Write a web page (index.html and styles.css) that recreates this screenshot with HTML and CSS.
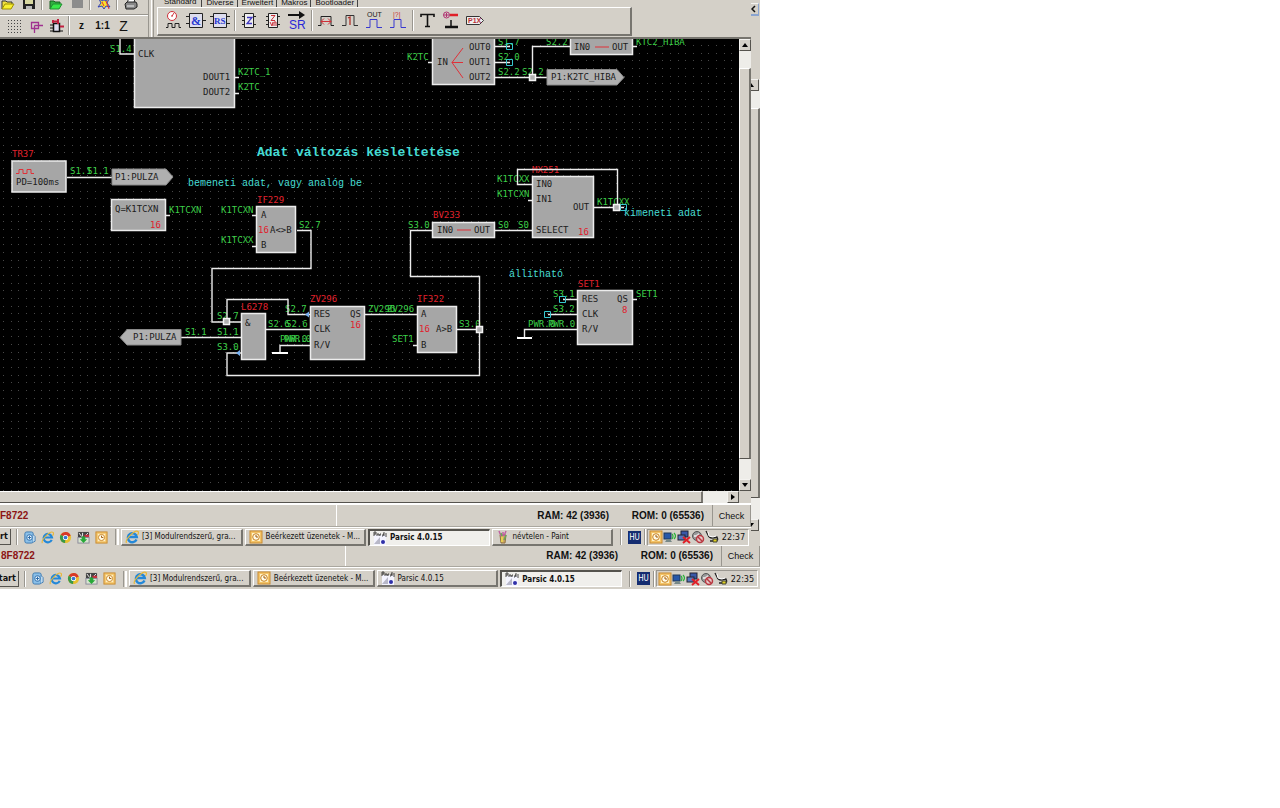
FILE: index.html
```html
<!DOCTYPE html>
<html lang="hu">
<head>
<meta charset="utf-8">
<title>Parsic 4.0.15</title>
<link rel="stylesheet" href="styles.css">
</head>
<body>
<svg class="defs" aria-hidden="true">
  <defs>
    <symbol id="i-mail" viewBox="0 0 14 14"><rect x="2" y="1" width="9" height="12" rx="2" fill="#8cc0e8" stroke="#3a78b0"/><path d="M11 4l2 2v5l-2 1" fill="#d8ecfa" stroke="#3a78b0"/><circle cx="7" cy="7" r="3" fill="#e8f6ff" stroke="#2868a8"/><path d="M5 7h4M7 5v4" stroke="#2868a8"/></symbol>
    <symbol id="i-ie" viewBox="0 0 14 14"><path d="M11.500 9.500A4.500 4.500 0 1 1 11.800 7H4" fill="none" stroke="#2488d8" stroke-width="2.400"/><path d="M1.500 13C-.5 10 10-1 13 1.500c1 1 .2 2.500-.6 3.500" fill="none" stroke="#e8b838" stroke-width="1.200"/></symbol>
    <symbol id="i-chrome" viewBox="0 0 14 14"><circle cx="7" cy="7" r="6" fill="#e8c030"/><path d="M7 7L1.800 4A6 6 0 0 1 12.600 5z" fill="#d83828"/><path d="M7 7L1.800 4A6 6 0 0 0 6.500 13z" fill="#389848"/><circle cx="7" cy="7" r="2.800" fill="#fff"/><circle cx="7" cy="7" r="2" fill="#3878d0"/></symbol>
    <symbol id="i-tool" viewBox="0 0 14 14"><rect x="1" y="1" width="12" height="6" fill="#444"/><path d="M2 2l3 4M6 2v4M9 5l3-3" stroke="#f4f4f4"/><path d="M8 4h5v3H8z" fill="#c83040"/><rect x="1" y="7" width="12" height="6" fill="#d8e4d0" stroke="#889"/><path d="M5 6h4v3h2l-4 4-4-4h2z" fill="#28a838"/></symbol>
    <symbol id="i-clock" viewBox="0 0 14 14"><rect x="1" y="1" width="12" height="12" fill="#f4c468" stroke="#c88a30"/><rect x="3" y="3" width="8" height="8" fill="#fff2c8"/><circle cx="7" cy="7" r="3.300" fill="#fffbe8" stroke="#c88020"/><path d="M7 5v2h2" fill="none" stroke="#a05808"/></symbol>
    <symbol id="i-parsic" viewBox="0 0 14 14"><path d="M1 4h12v10H1z" fill="#f4f4ff"/><path d="M1 13L7 6v7z" fill="#b8b8c8"/><path d="M1 1v4M1 1h2v2H1M4 5V3h2v2M7 5V3h1M9 5h1V3h1M11 1v4M12 3h2M12 5h2" fill="none" stroke="#222" stroke-width=".8"/><circle cx="10" cy="11" r="2" fill="#3030a8"/></symbol>
    <symbol id="i-paint" viewBox="0 0 14 14"><path d="M4 5h6l-1 8H5z" fill="#d0a868" stroke="#907040"/><path d="M5 6L3 1M7 6V2M8 6l2-5" stroke="#c060a0" stroke-width="1.500"/><path d="M6 6L5 3M8 10l2-5" stroke="#68a858" stroke-width="1.500"/><path d="M6 12V7" stroke="#e8d050" stroke-width="2"/></symbol>
    <symbol id="i-wifi" viewBox="0 0 14 14"><rect x="1" y="3" width="7" height="6" fill="#2858a8" stroke="#203858"/><path d="M2 12h7l-2-3H4z" fill="#788"/><path d="M9 4q2 2 0 5M11 3q3 3 0 6" fill="none" stroke="#28b038" stroke-width="1.200"/></symbol>
    <symbol id="i-nonet" viewBox="0 0 14 14"><rect x="4" y="1" width="7" height="6" fill="#3858a8" stroke="#223"/><rect x="1" y="5" width="7" height="5" fill="#5878c0" stroke="#223"/><path d="M6 7l7 6M13 7l-7 6" stroke="#e02028" stroke-width="2"/></symbol>
    <symbol id="i-mute" viewBox="0 0 14 14"><circle cx="6" cy="6" r="4.500" fill="#999" stroke="#555"/><path d="M3 5h2l3-2v6L5 7H3z" fill="#ddd"/><circle cx="9" cy="9" r="3.500" fill="#e8c8c8" stroke="#b83840" stroke-width="1.500"/><path d="M6.500 6.500l5 5" stroke="#b83840" stroke-width="1.500"/></symbol>
    <symbol id="i-plug" viewBox="0 0 14 14"><path d="M1 1l2 4q1 3 4 3l5-1q2 4-2 4H5" fill="none" stroke="#222" stroke-width="1.300"/><path d="M3 2l1 4 4 1 3-1" fill="none" stroke="#fff"/><path d="M8 9h4v3H8z" fill="#e0d020" stroke="#443"/></symbol>
    <pattern id="dots" width="23" height="23" patternUnits="userSpaceOnUse" x="3" y="-1"><path d="M0 .5h1M8 .5h1M15 .5h1M0 8.500h1M8 8.500h1M15 8.500h1M0 15.500h1M8 15.500h1M15 15.500h1" stroke="#484848"/></pattern>
  </defs>
</svg>

<div class="screen">
  <div class="upper">
    <main class="window">
      <header class="toolbars">
        <div class="bars">
          <div class="bar bar-file">
            <button class="tool" aria-label="Open"><svg width="14" height="14"><path d="M1 13V5h4l1 1h5v2" fill="#f0e040" stroke="#333"/><path d="M1 13l3-5h9l-3 5z" fill="#f8f030" stroke="#a09000"/></svg></button>
            <button class="tool" aria-label="Save"><svg width="14" height="14"><path d="M1 1h12v12H1z" fill="#222"/><path d="M3 1h8v7H3z" fill="#d8d8a0"/><path d="M4 10h6v3H4z" fill="#bbb"/></svg></button>
            <i class="sep"></i>
            <button class="tool" aria-label="Open project"><svg width="14" height="14"><path d="M1 13V5h4l1 1h5v2" fill="#30b040" stroke="#186020"/><path d="M1 13l3-5h9l-3 5z" fill="#38e848" stroke="#209030"/></svg></button>
            <button class="tool" aria-label="Stop"><svg width="14" height="14"><path d="M2 1h11v11H2z" fill="#8c8c8c"/></svg></button>
            <i class="sep"></i>
            <button class="tool" aria-label="Compile"><svg width="14" height="14"><path d="M7 1l1 4 4-2-2 4 3 4-4-1-2 3-2-3-4 1 3-4-2-4 4 2z" fill="#f8e030" stroke="#3040c0"/><path d="M5 6l2 4M9 5l3 8" stroke="#e03030"/></svg></button>
            <i class="sep"></i>
            <button class="tool" aria-label="Print"><svg width="14" height="14"><path d="M3 7l2-5h6l-1 5z" fill="#fff" stroke="#333"/><path d="M1 8l2-2h9l1 2v3l-3 2H2z" fill="#888" stroke="#222"/><path d="M3 10h7" stroke="#eee"/></svg></button>
          </div>
          <div class="bar bar-view">
            <button class="tool" aria-label="Grid"><svg width="14" height="14"><path d="M0 1.500h14M0 4.500h14M0 7.500h14M0 10.500h14M0 13.500h14" stroke="#444" stroke-dasharray="1 2"/></svg></button>
            <button class="tool" aria-label="Snap"><svg width="14" height="14"><path d="M2.500 3.500h7v6h-7zM5.500 6.500H14M5.500 6.500V14" fill="none" stroke="#a03090" stroke-width="1.300"/></svg></button>
            <button class="tool" aria-label="Chip"><svg width="14" height="14"><path d="M3.500 4.500h6v8h-6z" fill="#dde" stroke="#111" stroke-width="1.500"/><path d="M0 6h3M0 9h3M0 12h3M10 12h3" stroke="#111"/><path d="M3 1v3M8 0v5M3 2.500h6M10 7.500h4" stroke="#c02040" stroke-width="2"/></svg></button>
            <i class="sep"></i>
            <button class="tool zoom-s">z</button>
            <button class="tool zoom-m">1:1</button>
            <button class="tool zoom-l">Z</button>
          </div>
        </div>
        <i class="grip"></i>
        <div class="palette">
          <nav class="tabs">
            <button class="tab on">Standard</button><button class="tab">Diverse</button><button class="tab">Erweitert</button><button class="tab">Makros</button><button class="tab">Bootloader</button>
          </nav>
          <div class="parts">
            <button class="part" aria-label="Timer"><svg width="20" height="20"><circle cx="10" cy="6" r="4.500" fill="#fff" stroke="#d03038"/><path d="M10 6l2-3M9 6h2" stroke="#d03038"/><path d="M4 17.500h2v-4h4v4h3v-4h4v4h2" fill="none" stroke="#222"/></svg></button>
            <button class="part" aria-label="AND"><svg width="20" height="20"><path d="M3.500 3.500h13v14h-13zM0 6.500h3M0 13.500h3M17 10.500h3" fill="#dde" stroke="#222"/><text x="5" y="15" class="ic-blue">&amp;</text></svg></button>
            <button class="part" aria-label="RS"><svg width="20" height="20"><path d="M3.500 3.500h13v14h-13zM0 6.500h3M0 13.500h3M17 6.500h3M17 13.500h3" fill="#dde" stroke="#222"/><text x="4" y="14" class="ic-blue ic-small">RS</text></svg></button>
            <i class="sep"></i>
            <button class="part" aria-label="Counter"><svg width="20" height="20"><path d="M5.500 3.500h9v14h-9zM3 6.500h2M3 10.500h2M3 14.500h2M15 6.500h2M15 14.500h2" fill="#eee" stroke="#222"/><path d="M8 7.500h5l-5 6h5" fill="none" stroke="#4038c0" stroke-width="1.300"/></svg></button>
            <button class="part" aria-label="Up-down counter"><svg width="20" height="20"><path d="M5.500 3.500h9v14h-9zM3 6.500h2M3 10.500h2M3 14.500h2M15 6.500h2M15 14.500h2" fill="#eee" stroke="#222"/><path d="M8 5.500h4l-4 5h4M7 12l2 4 1-4M11 16v-4h2v4" fill="none" stroke="#c83038"/></svg></button>
            <button class="part" aria-label="Shift register"><svg width="20" height="20"><path d="M1 5h14" stroke="#111" stroke-width="2"/><path d="M12 1l6 4-6 4" fill="#111"/><text x="2" y="19" class="ic-sr">SR</text></svg></button>
            <i class="sep"></i>
            <button class="part" aria-label="Delay"><svg width="20" height="20"><path d="M2 15.500h3v-9h10v9h3" fill="none" stroke="#222"/><path d="M5 11.500h10M8 8.500l-3 3 3 3M12 8.500l3 3-3 3" fill="none" stroke="#d03038"/></svg></button>
            <button class="part" aria-label="One shot"><svg width="20" height="20"><path d="M2 15.500h4v-10h8v10h4" fill="none" stroke="#333"/><path d="M8 8l2-1v8" fill="none" stroke="#b03028" stroke-width="1.300"/></svg></button>
            <button class="part" aria-label="Output pulse"><svg width="20" height="20"><text x="3" y="7" class="ic-out">OUT</text><path d="M2 17.500h4v-8h7v8h5" fill="none" stroke="#3838d0"/></svg></button>
            <button class="part" aria-label="Input pulse"><svg width="20" height="20"><text x="5" y="7" class="ic-out ic-red">|?|</text><path d="M2 17.500h4v-8h7v8h5" fill="none" stroke="#3838d0"/></svg></button>
            <i class="sep"></i>
            <button class="part" aria-label="Text"><svg width="20" height="20"><path d="M4 7V4.500h13V7M10.500 4v12M8 16.500h5" fill="none" stroke="#111" stroke-width="1.600"/></svg></button>
            <button class="part" aria-label="Terminal"><svg width="20" height="20"><circle cx="5.500" cy="5" r="3" fill="none" stroke="#b03070"/><path d="M3 5h5M5.500 3v4" stroke="#b03070"/><path d="M9 5h8" stroke="#e02028" stroke-width="2.500"/><path d="M10 10v6" stroke="#111" stroke-width="1.500"/><path d="M4 17h13" stroke="#111" stroke-width="2.500"/></svg></button>
            <button class="part" aria-label="Port"><svg width="20" height="20"><path d="M1.500 6.500h13l4 4-4 4h-13z" fill="#eee" stroke="#333"/><text x="3" y="13" class="ic-p1">P1X</text></svg></button>
          </div>
        </div>
      </header>

      <div class="work">
        <svg class="canvas" role="img" aria-label="Parsic schematic">
          <g transform="translate(0 -39)">
            <rect width="100%" height="500" fill="url(#dots)"/>
            <g class="net">
              <text x="110" y="52">S1.4</text><text x="238" y="75">K2TC_1</text><text x="238" y="90">K2TC</text>
              <text x="407" y="60">K2TC</text><text x="498" y="45">S1.7</text><text x="498" y="60">S2.0</text><text x="498" y="75">S2.2</text><text x="522" y="75">S2.2</text><text x="546" y="45">S2.2</text><text x="636" y="45">KTC2_HIBA</text>
              <text x="70" y="174">S1.1</text><text x="87" y="174">S1.1</text><text x="169" y="213">K1TCXN</text>
              <text x="221" y="213">K1TCXN</text><text x="221" y="243">K1TCXX</text><text x="299" y="228">S2.7</text>
              <text x="185" y="335">S1.1</text><text x="217" y="335">S1.1</text><text x="217" y="319">S2.7</text><text x="217" y="350">S3.0</text>
              <text x="268" y="327">S2.6</text><text x="286" y="327">S2.6</text><text x="285" y="312">S2.7</text><text x="280" y="342">PWR.0</text><text x="284" y="342">PWR.0</text>
              <text x="368" y="312">ZV296</text><text x="387" y="312">ZV296</text><text x="392" y="342">SET1</text><text x="459" y="327">S3.0</text>
              <text x="408" y="228">S3.0</text><text x="498" y="228">S0</text><text x="518" y="228">S0</text>
              <text x="497" y="182">K1TCXX</text><text x="497" y="197">K1TCXN</text><text x="597" y="205">K1TCXX</text>
              <text x="553" y="297">S3.1</text><text x="553" y="312">S3.2</text><text x="528" y="327">PWR.0</text><text x="548" y="327">PWR.0</text><text x="636" y="297">SET1</text>
            </g>
            <g class="name">
              <text x="12" y="157">TR37</text><text x="257" y="203">IF229</text><text x="241" y="310">L6278</text><text x="310" y="302">ZV296</text><text x="417" y="302">IF322</text><text x="433" y="218">BV233</text><text x="532" y="173">MX251</text><text x="578" y="287">SET1</text>
            </g>
            <g class="note">
              <text x="257" y="156" class="note-title">Adat változás késleltetése</text>
              <text x="188" y="186">bemeneti adat, vagy analóg be</text>
              <text x="624" y="216">kimeneti adat</text>
              <text x="509" y="277">állítható</text>
            </g>
            <path class="wire" d="M120 38v16h14M235 77.500h4M235 93.500h4M428 62.500h4M495 46.500h15M495 62.500h15M495 77.500h52M532.500 77v-30.500H570M633 46.500h4M67 177.500h45M166 215.500h4M252 215.500h4M252 246.500h4M297 230.500h14v38H212v53.500h29M227 322V299.500h61v15h22M181 337.500h60M241 353H227v22.500h252.500V276.500H410.500v-46H432M457 329.500h23M265 329.500h45M310 345.500H280v8M365 314.500h52M413 345.500h4M495 230.500h37M528 200.500h4M594 207.500h30M617.500 207V169.500H517.500v15H532M563 299.500h14M548 314.500h29M577 329.500H524.500v8M633 299.500h4"/>
            <path d="M272 353h16M517 338h15" class="ground"/>
            <path d="M506.500 43.500h6v6h-6zM506.500 59.500h6v6h-6zM620.500 204.500h6v6h-6zM559.500 296.500h6v6h-6zM544.500 311.500h6v6h-6z" class="open-end"/>
            <g class="joint"><rect x="529.500" y="74.500" width="6" height="6"/><rect x="223.500" y="318.500" width="6" height="6"/><rect x="476.500" y="326.500" width="6" height="6"/><rect x="613.500" y="204.500" width="6" height="6"/></g>
            <g class="block">
              <rect x="134.500" y="34.500" width="100" height="73"/><rect x="432.500" y="34.500" width="62" height="50"/><rect x="570.500" y="34.500" width="62" height="20"/>
              <rect x="12" y="161" width="54" height="31"/><rect x="111.500" y="199.500" width="54" height="31"/><rect x="256.500" y="206.500" width="39" height="46"/>
              <rect x="241.500" y="313.500" width="24" height="46"/><rect x="310.500" y="306.500" width="54" height="53"/><rect x="417.500" y="306.500" width="39" height="46"/>
              <rect x="432.500" y="222.500" width="62" height="15"/><rect x="532.500" y="176.500" width="61" height="61"/><rect x="577.500" y="290.500" width="55" height="54"/>
            </g>
            <path class="port" d="M547 69.500h70l7 8-7 7.500h-70zM112 169h54l7 8-7 8h-54zM181 329.500h-54l-7 8 7 7.500h54z"/>
            <path class="invert" d="M305 314.500l4-3v6zM236 353l4-3v6z"/>
            <path class="red-line" d="M463 48l-11 14.500 11 15.500M452 62.500h11M595 47h14M457 230h14M16 173.500h3v-4h4v4h4v-4h4v4h3"/>
            <g class="pin">
              <text x="138" y="57">CLK</text><text x="203" y="80">DOUT1</text><text x="203" y="95">DOUT2</text>
              <text x="437" y="65">IN</text><text x="469" y="50">OUT0</text><text x="469" y="65">OUT1</text><text x="469" y="80">OUT2</text><text x="574" y="50">IN0</text><text x="612" y="50">OUT</text><text x="551" y="80">P1:K2TC_HIBA</text>
              <text x="16" y="185">PD=100ms</text><text x="115" y="180">P1:PULZA</text><text x="115" y="212">Q=K1TCXN</text>
              <text x="261" y="218">A</text><text x="270" y="233">A&lt;&gt;B</text><text x="261" y="248">B</text>
              <text x="133" y="340">P1:PULZA</text><text x="245" y="326">&amp;</text>
              <text x="314" y="317">RES</text><text x="350" y="317">QS</text><text x="314" y="332">CLK</text><text x="314" y="348">R/V</text>
              <text x="421" y="317">A</text><text x="436" y="332">A&gt;B</text><text x="421" y="348">B</text>
              <text x="437" y="233">IN0</text><text x="474" y="233">OUT</text>
              <text x="536" y="187">IN0</text><text x="536" y="202">IN1</text><text x="573" y="210">OUT</text><text x="536" y="233">SELECT</text>
              <text x="582" y="302">RES</text><text x="617" y="302">QS</text><text x="582" y="317">CLK</text><text x="582" y="332">R/V</text>
            </g>
            <g class="bits"><text x="150" y="228">16</text><text x="258" y="233">16</text><text x="350" y="328">16</text><text x="419" y="332">16</text><text x="578" y="235">16</text><text x="622" y="313">8</text></g>
          </g>
        </svg>
        <div class="vscroll">
          <button class="sb" aria-label="Scroll up"><svg width="6" height="4"><path d="M3 0l3 4H0z"/></svg></button>
          <i class="gap-top"></i><i class="thumb"></i><i class="gap-bottom"></i>
          <button class="sb" aria-label="Scroll down"><svg width="6" height="4"><path d="M3 4l3-4H0z"/></svg></button>
        </div>
      </div>
      <div class="hscroll">
        <i class="thumb"></i><i class="gap-end"></i>
        <button class="sb" aria-label="Scroll right"><svg width="4" height="6"><path d="M4 3L0 0v6z"/></svg></button>
        <i class="corner"></i>
      </div>
      <footer class="status">
        <span class="device">F8722</span><span class="field ram">RAM: 42 (3936)</span><span class="field rom">ROM: 0 (65536)</span><button class="check">Check</button>
      </footer>
      <div class="taskbar">
        <button class="start">Start</button><i class="divider"></i>
        <div class="quick">
          <button aria-label="Mail"><svg><use href="#i-mail"/></svg></button><button aria-label="Internet Explorer"><svg><use href="#i-ie"/></svg></button><button aria-label="Chrome"><svg><use href="#i-chrome"/></svg></button><button aria-label="Tool"><svg><use href="#i-tool"/></svg></button><button aria-label="Outlook"><svg><use href="#i-clock"/></svg></button>
        </div>
        <i class="divider double"></i>
        <div class="tasks">
          <button class="task"><svg><use href="#i-ie"/></svg>[3] Modulrendszerű, gra...</button>
          <button class="task"><svg><use href="#i-clock"/></svg>Beérkezett üzenetek - M...</button>
          <button class="task active"><svg><use href="#i-parsic"/></svg>Parsic 4.0.15</button>
          <button class="task"><svg><use href="#i-paint"/></svg>névtelen - Paint</button>
        </div>
        <i class="divider after"></i><span class="lang">HU</span><i class="divider slim"></i>
        <div class="tray"><svg><use href="#i-clock"/></svg><svg><use href="#i-wifi"/></svg><svg><use href="#i-nonet"/></svg><svg><use href="#i-mute"/></svg><svg><use href="#i-plug"/></svg><time>22:37</time></div>
      </div>
    </main>
    <aside class="behind">
      <div class="behind-top"><button class="chevron" aria-label="Collapse"><svg width="5" height="8"><path d="M4 1L1 4l3 3" fill="none" stroke="#111" stroke-width="1.500"/></svg></button></div>
      <button class="sb" aria-label="Scroll up"><svg width="3" height="4"><path d="M0 0l3 4H0z"/></svg></button>
      <i class="gap-top"></i><i class="thumb"></i><i class="gap-bottom"></i>
      <button class="sb" aria-label="Scroll down"><svg width="3" height="4"><path d="M0 4l3-4H0z"/></svg></button>
      <i class="rest"></i>
    </aside>
  </div>
  <footer class="status rear">
    <span class="device">8F8722</span><span class="field ram">RAM: 42 (3936)</span><span class="field rom">ROM: 0 (65536)</span><button class="check">Check</button>
  </footer>
  <div class="taskbar rear">
    <button class="start">Start</button><i class="divider"></i>
    <div class="quick">
      <button aria-label="Mail"><svg><use href="#i-mail"/></svg></button><button aria-label="Internet Explorer"><svg><use href="#i-ie"/></svg></button><button aria-label="Chrome"><svg><use href="#i-chrome"/></svg></button><button aria-label="Tool"><svg><use href="#i-tool"/></svg></button><button aria-label="Outlook"><svg><use href="#i-clock"/></svg></button>
    </div>
    <i class="divider double"></i>
    <div class="tasks">
      <button class="task"><svg><use href="#i-ie"/></svg>[3] Modulrendszerű, gra...</button>
      <button class="task"><svg><use href="#i-clock"/></svg>Beérkezett üzenetek - M...</button>
      <button class="task"><svg><use href="#i-parsic"/></svg>Parsic 4.0.15</button>
      <button class="task active"><svg><use href="#i-parsic"/></svg>Parsic 4.0.15</button>
    </div>
    <i class="divider after"></i><span class="lang">HU</span><i class="divider slim"></i>
    <div class="tray"><svg><use href="#i-clock"/></svg><svg><use href="#i-wifi"/></svg><svg><use href="#i-nonet"/></svg><svg><use href="#i-mute"/></svg><svg><use href="#i-plug"/></svg><time>22:35</time></div>
  </div>
</div>
</body>
</html>
```
FILE: styles.css
```css
* { box-sizing: border-box; }
body { margin: 0; background: #fff; font-family: "Liberation Sans", Arial, sans-serif; font-size: 9px; color: #111; }
button { margin: 0; padding: 0; border: 0; background: none; font: inherit; color: inherit; }
svg { display: block; flex: none; }
.defs { position: absolute; width: 0; height: 0; }

.screen { max-width: 760px; background: #d4d0c8; }
.upper { display: flex; }
.window { flex: 1; min-width: 0; }

/* toolbars */
.toolbars { display: flex; height: 39px; border-bottom: 2px solid #77756f; overflow: hidden; }
.bars { flex: none; width: 149px; border-right: 1px solid #99968f; }
.bar { display: flex; align-items: center; }
.bar-file { height: 15px; margin-left: -3px; align-items: flex-end; padding-bottom: 4px; border-bottom: 1px solid #99968f; }
.bar-view { height: 22px; padding: 0 0 2px 4px; border-top: 1px solid #fff; }
.tool { flex: none; width: 21px; display: flex; justify-content: center; align-items: center; }
.sep { flex: none; align-self: stretch; width: 2px; margin: 0 2px; border-left: 1px solid #99968f; border-right: 1px solid #fff; }
.bar-view .sep { margin: 0 1px; }
.zoom-s, .zoom-m { font-weight: bold; font-size: 10px; }
.zoom-l { font-size: 14px; }
.grip { flex: none; width: 3px; margin: 0 3px 0 2px; border-left: 1px solid #fff; border-right: 1px solid #99968f; }
.palette { width: 475px; display: flex; flex-direction: column; }
.tabs { display: flex; align-items: flex-end; height: 7px; overflow: hidden; }
.tab { flex: none; padding: 0 3px 0 4px; border-right: 1px solid #444; font-size: 8px; line-height: 10px; height: 9px; }
.tab.on { padding: 0 5px 0 7px; height: 10px; }
.parts { display: flex; align-items: center; height: 29px; padding: 0 0 2px 2px; border: 1px solid #fff; border-right: 2px solid #77756f; border-bottom: 2px solid #77756f; }
.parts .sep { margin: 2px 1px 1px 2px; }
.part { flex: none; width: 24px; display: flex; justify-content: center; }
.ic-blue { font: bold 12px "Liberation Serif", serif; fill: #2838d0; }
.ic-blue.ic-small { font-size: 9px; }
.ic-sr { font: 12px "Liberation Sans", sans-serif; fill: #2828d8; }
.ic-out { font: 7px "Liberation Sans", sans-serif; fill: #222; }
.ic-out.ic-red { fill: #c83038; }
.ic-p1 { font: bold 7px "Liberation Sans", sans-serif; fill: #b83038; }

/* schematic */
.work { display: flex; height: 452px; }
.canvas { flex: 1; min-width: 0; height: 100%; background: #000; overflow: hidden; font: 9px "DejaVu Sans Mono", monospace; }
.net { fill: #3ccf48; }
.name, .bits { fill: #e0202c; }
.pin { fill: #202020; }
.note { fill: #46dcd4; font: 10px "Liberation Mono", monospace; }
.note-title { font: bold 13px "Liberation Mono", monospace; }
.wire { fill: none; stroke: #ececec; stroke-width: 1.4px; }
.ground { stroke: #fff; stroke-width: 2px; }
.open-end { fill: none; stroke: #38c8d0; }
.joint { fill: #b0b0b0; stroke: #f4f4f4; stroke-width: 1.5px; }
.block { fill: #a6a6a6; stroke: #ececec; stroke-width: 1.5px; }
.port { fill: #b0b0b0; stroke: #8a8a8a; }
.invert { fill: #78b0f0; }
.red-line { fill: none; stroke: #e03038; }

/* scroll bars */
.vscroll, .behind { display: flex; flex-direction: column; background: #eeede9; }
.vscroll { flex: none; width: 12px; }
.sb { flex: none; width: 12px; height: 12px; display: flex; align-items: center; justify-content: center; background: #d4d0c8; border: 1px solid #f4f3f0; border-right-color: #55534e; border-bottom-color: #55534e; }
.thumb { background: #d4d0c8; border: 1px solid #fff; border-right: 2px solid #77756f; border-bottom-color: #55534e; }
.vscroll .gap-top { height: 17px; }
.vscroll .thumb { flex: 1; }
.vscroll .gap-bottom { height: 20px; }
.hscroll { display: flex; height: 12px; background: #eeede9; }
.hscroll .thumb { flex: 1; border-left: 0; }
.hscroll .gap-end { width: 24px; }
.hscroll .corner { width: 12px; background: #d4d0c8; }
.behind { flex: none; width: 9px; }
.behind .sb { width: 8px; border-left: 0; justify-content: flex-start; }
.behind-top { height: 79px; padding-top: 3px; background: #d4d0c8; }
.chevron { display: flex; align-items: center; width: 8px; height: 13px; border: 1px solid #f4f3f0; border-left: 0; border-right: 1px solid #8aa4d0; border-bottom: 2px solid #8aa4d0; }
.behind .gap-top { height: 17px; }
.behind .thumb { height: 390px; border-left: 0; }
.behind .gap-bottom { height: 21px; }
.behind .rest { flex: 1; background: #d4d0c8; }

/* status line */
.status { display: flex; height: 24px; border-top: 2px solid #fff; border-bottom: 1px solid #aaa79f; font-weight: bold; font-size: 10px; line-height: 22px; white-space: nowrap; }
.status.rear { height: 21px; border-top: 0; line-height: 20px; }
.device { width: 337px; color: #8c1414; border-right: 1px solid #fff; }
.status.rear .device { width: 346px; padding-left: 1px; }
.field { flex: 1; text-align: right; padding-right: 8px; }
.field.rom { flex: none; width: 95px; }
.check { flex: none; width: 39px; border-left: 1px solid #99968f; border-right: 1px solid #99968f; font-size: 9px; font-weight: normal; }

/* task bar */
.taskbar { display: flex; align-items: center; height: 19px; padding-right: 2px; border-top: 1px solid #fff; white-space: nowrap; font: 8px "DejaVu Sans Condensed", "DejaVu Sans", sans-serif; }
.taskbar.rear { height: 22px; }
.start { flex: none; width: 11px; height: 16px; display: flex; justify-content: flex-end; overflow: hidden; padding-right: 2px; font-weight: bold; font-size: 9px; line-height: 15px; border-right: 1px solid #55534e; border-bottom: 1px solid #55534e; }
.rear .start { width: 19px; }
.divider { flex: none; width: 2px; height: 16px; margin: 0 2px 0 5px; border-left: 1px solid #99968f; border-right: 1px solid #fff; }
.divider.double { width: 4px; border-right-width: 2px; }
.divider.after { margin-left: 7px; }
.quick { flex: none; display: flex; }
.quick button { width: 18px; display: flex; justify-content: center; }
.taskbar svg { width: 14px; height: 14px; }
.taskbar .quick svg { width: 13px; height: 13px; }
.tasks { flex: 1; min-width: 0; display: flex; gap: 2px; }
.task { flex: 1 1 0; min-width: 0; height: 17px; display: flex; align-items: center; gap: 3px; padding-left: 3px; overflow: hidden; border: 1px solid #fff; border-right: 2px solid #77756f; border-bottom: 2px solid #77756f; }
.task.active { font-weight: bold; background: #f0efec; border: 1px solid #fff; border-left: 2px solid #55534e; border-top: 2px solid #55534e; }
.lang { flex: none; width: 13px; margin-left: 4px; height: 13px; line-height: 13px; text-align: center; background: #142c70; color: #fff; }
.divider.slim { margin: 0 1px 0 3px; }
.tray { flex: none; width: 102px; height: 17px; display: flex; align-items: center; padding-left: 1px; border: 1px solid #fff; border-left-color: #99968f; border-top-color: #99968f; }
.tray time { flex: 1; text-align: center; font-size: 9px; }
```
